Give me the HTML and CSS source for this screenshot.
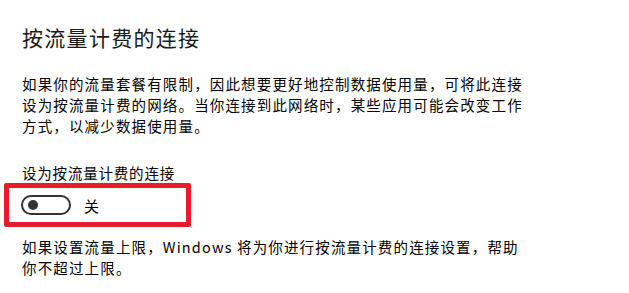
FILE: index.html
```html
<!DOCTYPE html>
<html lang="zh-CN">
<head>
    <meta charset="UTF-8">
    <meta name="viewport" content="width=device-width, initial-scale=1.0">
    <title>按流量计费的连接</title>
    <link rel="stylesheet" href="styles.css">
</head>
<body>
    <div class="settings-page">
        <h1 class="page-title">按流量计费的连接</h1>

        <p class="desc">如果你的流量套餐有限制，因此想要更好地控制数据使用量，可将此连接设为按流量计费的网络。当你连接到此网络时，某些应用可能会改变工作方式，以减少数据使用量。</p>

        <div class="setting-label">设为按流量计费的连接</div>

        <!-- Toggle, with red highlight box round it -->
        <div class="toggle-row">
            <span class="toggle"><span class="knob"></span></span>
            <span class="toggle-state">关</span>
        </div>

        <p class="desc note">如果设置流量上限，Windows 将为你进行按流量计费的连接设置，帮助你不超过上限。</p>
    </div>
</body>
</html>
```

FILE: styles.css
```css
/* General */
body {
    margin: 0;
    background: #fff;
    color: #000;
    font-family: "Microsoft YaHei", "Noto Sans CJK SC", "Noto Sans", sans-serif;
}

.settings-page {
    padding: 20px 0 0 22px;
    width: 508px;
}

/* Title */
.page-title {
    margin: 0;
    font-size: 21px;
    font-weight: 400;
    line-height: 34px;
    letter-spacing: 1.3px;
    color: #1a1a1a;
}

/* Paragraphs */
.desc {
    margin: 19px 0 0;
    font-size: 14.5px;
    line-height: 21px;
    letter-spacing: 1.15px;
}

.desc.note {
    margin-top: 9px;
    line-height: 21px;
}

/* Label */
.setting-label {
    margin-top: 28px;
    font-size: 14.5px;
    line-height: 18px;
    letter-spacing: 0.8px;
}

/* Toggle row with red highlight */
.toggle-row {
    display: flex;
    align-items: center;
    gap: 13px;
    width: 165px;
    height: 34px;
    margin: 1px 0 0 -18px;
    padding: 0 0 0 12px;
    border: 5px solid #e81c28;
    border-radius: 2px;
}

.toggle {
    position: relative;
    box-sizing: border-box;
    width: 50px;
    height: 20px;
    border: 2px solid #333;
    border-radius: 10px;
}

.knob {
    position: absolute;
    left: 5px;
    top: 3px;
    width: 10px;
    height: 10px;
    border-radius: 50%;
    background: #333;
}

.toggle-state {
    font-size: 15px;
}
```
